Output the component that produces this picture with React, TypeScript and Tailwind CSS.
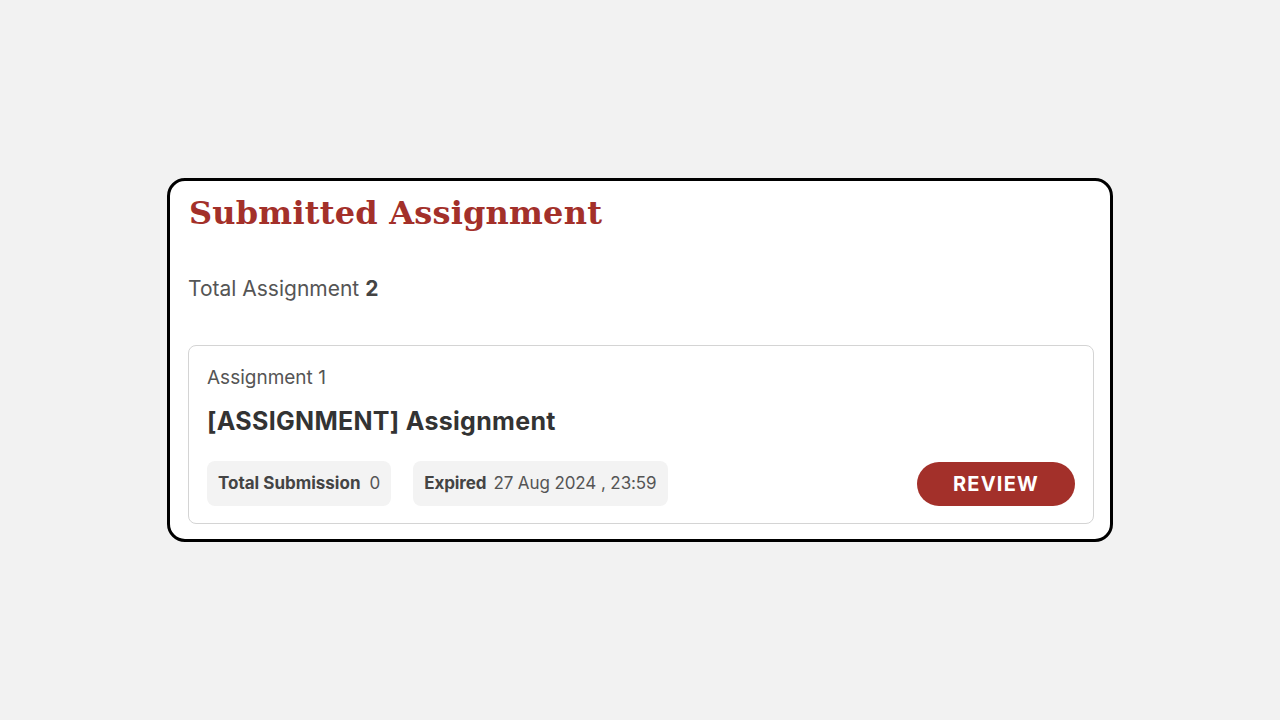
import React from 'react';

export default function App() {
  return (
    <div className="min-h-screen w-full bg-[#f2f2f2] flex items-center justify-center">
      <div
        className="w-[946px] h-[364px] bg-white border-[3px] border-black rounded-[18px] pl-[18px] pr-[16px] pt-[8px] pb-[15px] flex flex-col"
        style={{ fontFamily: 'Inter, "Noto Sans", sans-serif' }}
      >
        {/* Title */}
        <h1
          className="text-[32px] leading-[48px] font-bold text-[#a3302a] pl-[1px] tracking-[0.2px]"
          style={{ fontFamily: '"DejaVu Serif", "Liberation Serif", serif' }}
        >
          Submitted Assignment
        </h1>

        <p className="mt-[38px] text-[21px] leading-[28px] text-[#555]">
          Total Assignment <span className="font-bold text-[#444]">2</span>
        </p>

        {/* Assignment card */}
        <div className="mt-auto border border-[#d4d4d4] rounded-[8px] px-[18px] pt-[19px] pb-[17px]">
          <div className="text-[19px] leading-[26px] text-[#555]">Assignment 1</div>
          <div className="mt-[16px] text-[25px] leading-[28px] font-bold text-[#333] tracking-[0.3px]">
            [ASSIGNMENT] Assignment
          </div>
          <div className="mt-[26px] flex items-center">
            <div className="h-[45px] px-[11px] flex items-center gap-[9px] bg-[#f3f3f3] rounded-[8px] text-[17px]">
              <span className="font-bold text-[#444]">Total Submission</span>
              <span className="text-[#555]">0</span>
            </div>
            <div className="ml-[22px] h-[45px] px-[11px] flex items-center gap-[7px] bg-[#f3f3f3] rounded-[8px] text-[17px] tracking-[-0.1px]">
              <span className="font-bold text-[#444]">Expired</span>
              <span className="text-[#555]">27 Aug 2024 , 23:59</span>
            </div>
            <button className="ml-auto w-[158px] h-[44px] rounded-full bg-[#a3302a] text-white text-[20px] font-bold tracking-[1.2px]">
              REVIEW
            </button>
          </div>
        </div>
      </div>
    </div>
  );
}
